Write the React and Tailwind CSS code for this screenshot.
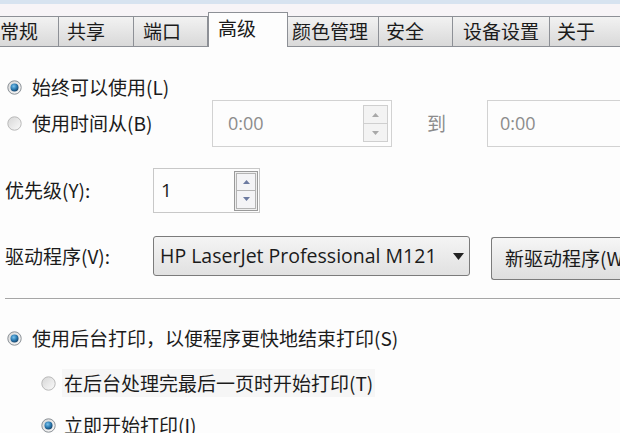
import React from 'react';

const tabs = [
  { label: '常规', w: 'w-[69px]', pl: 'pl-[9px]', first: true },
  { label: '共享', w: 'w-[76px]', pl: 'pl-[8px]' },
  { label: '端口', w: 'w-[75px]', pl: 'pl-[9px]' },
  { label: '高级', w: 'w-[80px]', pl: 'pl-[9px]', active: true },
  { label: '颜色管理', w: 'w-[92px]', pl: 'pl-[4px]' },
  { label: '安全', w: 'w-[75px]', pl: 'pl-[7px]' },
  { label: '设备设置', w: 'w-[98px]', pl: 'pl-[10px]' },
  { label: '关于', w: 'w-[90px]', pl: 'pl-[7px]' },
];

const Radio = ({ checked }) => (
  <svg width="15" height="15" viewBox="0 0 15 15" className="shrink-0">
    <defs>
      <linearGradient id="rOff" x1="0" y1="0" x2="1" y2="1">
        <stop offset="0" stopColor="#d6d6d6" />
        <stop offset="1" stopColor="#fbfbfb" />
      </linearGradient>
      <radialGradient id="rDot" cx="0.4" cy="0.35" r="0.7">
        <stop offset="0" stopColor="#7cc4ee" />
        <stop offset="0.55" stopColor="#2a79b0" />
        <stop offset="1" stopColor="#143e63" />
      </radialGradient>
    </defs>
    <circle cx="7.5" cy="7.5" r="6.7" fill="url(#rOff)" stroke={checked ? '#8a9096' : '#b9b9b9'} strokeWidth="1" />
    {checked && <circle cx="7.5" cy="7.5" r="4" fill="url(#rDot)" />}
  </svg>
);

const Arrow = ({ up, color }) => (
  <svg width="7" height="4" viewBox="0 0 7 4">
    <path d={up ? 'M0 4 L3.5 0 L7 4 Z' : 'M0 0 L3.5 4 L7 0 Z'} fill={color} />
  </svg>
);

const Spinner = ({ dim }) => (
  <div
    className={
      dim
        ? 'flex flex-col w-[25px] h-[37px] border border-[#cfcfcf] bg-[#f3f3f3]'
        : 'flex flex-col w-[24px] h-[40px] border border-[#9a9a9a] bg-[#eeeeee] p-px'
    }
  >
    <div
      className={
        dim
          ? 'flex-1 flex items-center justify-center border-b border-[#cfcfcf]'
          : 'flex-1 flex items-center justify-center border border-[#b4b4b4] bg-[#f4f4f6]'
      }
    >
      <Arrow up color={dim ? '#a8a8a8' : '#6c7aa0'} />
    </div>
    <div
      className={
        dim
          ? 'flex-1 flex items-center justify-center'
          : 'flex-1 flex items-center justify-center border border-[#b4b4b4] border-t-0 bg-[#f4f4f6]'
      }
    >
      <Arrow color={dim ? '#a8a8a8' : '#6c7aa0'} />
    </div>
  </div>
);

const App = () => {
  return (
    <div className="w-[620px] h-[433px] overflow-hidden bg-[#fdfdfd] text-[#1b1b1b] text-[19px] font-['Open_Sans','Noto_Sans_CJK_SC',sans-serif]">
      <div className="h-[4px] bg-[#d7e3f0]" />
      <div className="h-[43px] flex items-end bg-[#f7f4f7] border-b border-[#8d9096]">
        {tabs.map((tab) =>
          tab.active ? (
            <div
              key={tab.label}
              className={`${tab.w} ${tab.pl} h-[35px] -mb-px shrink-0 bg-[#fdfdfd] border border-b-0 border-[#8d9096] flex items-center pb-[3px] text-[19px] font-['Noto_Sans_CJK_SC',sans-serif]`}
            >
              {tab.label}
            </div>
          ) : (
            <div
              key={tab.label}
              className={`${tab.w} ${tab.pl} ${tab.first ? 'ml-[-10px]' : '-ml-px'} h-[30px] shrink-0 border border-b-0 border-[#8d9096] bg-gradient-to-b from-[#f2f2f2] to-[#d9d9d9] flex items-center text-[19px] font-['Noto_Sans_CJK_SC',sans-serif]`}
            >
              {tab.label}
            </div>
          )
        )}
      </div>

      <div className="font-['Noto_Sans_CJK_SC',sans-serif]">
        <div className="mt-[27px] h-[26px] flex items-center pl-[7px] gap-[10px]">
          <Radio checked />
          <span>始终可以使用(L)</span>
        </div>

        <div className="h-[47px] flex items-center">
          <div className="w-[212px] flex items-center pl-[7px] gap-[10px]">
            <Radio />
            <span>使用时间从(B)</span>
          </div>
          <div className="w-[180px] h-[47px] border border-[#d2d2d2] bg-[#fdfdfd] flex items-center justify-between pl-[15px] pr-[3px]">
            <span className="text-[#8c8c8c] font-['Open_Sans',sans-serif] text-[18px]">0:00</span>
            <Spinner dim />
          </div>
          <span className="ml-[35px] w-[60px] text-[#8c8c8c]">到</span>
          <div className="flex-1 h-[47px] border border-[#d2d2d2] border-r-0 flex items-center pl-[12px]">
            <span className="text-[#8c8c8c] font-['Open_Sans',sans-serif] text-[18px]">0:00</span>
          </div>
        </div>

        <div className="mt-[21px] h-[45px] flex items-center">
          <span className="w-[153px] pl-[5px]">优先级(Y):</span>
          <div className="w-[107px] h-[45px] border border-[#c8c8c8] flex items-center justify-between pl-[7px] pr-[1px]">
            <span className="font-['Open_Sans',sans-serif] text-[19px]">1</span>
            <Spinner />
          </div>
        </div>

        <div className="mt-[23px] h-[44px] flex items-start">
          <span className="w-[153px] pl-[5px] h-[40px] flex items-center">驱动程序(V):</span>
          <div className="w-[317px] h-[40px] rounded-[3px] border border-[#7b7b7b] bg-gradient-to-b from-[#f4f4f4] to-[#e1e1e1] flex items-center justify-between pl-[6px] pr-[5px] font-['Open_Sans',sans-serif] text-[19.5px] whitespace-nowrap">
            <span>HP LaserJet Professional M121</span>
            <svg width="11" height="7" viewBox="0 0 11 7" className="shrink-0">
              <path d="M0 0 L11 0 L5.5 7 Z" fill="#222" />
            </svg>
          </div>
          <div className="ml-[21px] mt-px flex-1 h-[43px] rounded-l-[3px] border border-r-0 border-[#7b7b7b] bg-gradient-to-b from-[#f6f6f6] to-[#dedede] flex items-center pl-[13px] whitespace-nowrap overflow-hidden">
            新驱动程序(W)
          </div>
        </div>

        <div className="mt-[18px] ml-[5px] h-[2px] border-t border-[#a6a6a6] border-b border-b-white" />

        <div className="mt-[25px] h-[26px] flex items-center pl-[7px] gap-[10px]">
          <Radio checked />
          <span>使用后台打印，以便程序更快地结束打印(S)</span>
        </div>

        <div className="mt-[19px] h-[26px] flex items-center pl-[41px] gap-[6px]">
          <Radio />
          <span className="bg-[#f6f6f6] px-[2px]">在后台处理完最后一页时开始打印(T)</span>
        </div>

        <div className="mt-[16px] h-[26px] flex items-center pl-[41px] gap-[6px]">
          <Radio checked />
          <span className="px-[2px]">立即开始打印(I)</span>
        </div>
      </div>
    </div>
  );
};

export default App;
